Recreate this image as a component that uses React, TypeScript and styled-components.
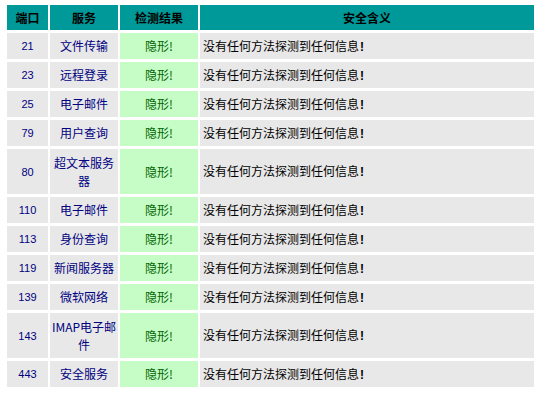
import React from 'react';
import styled, { createGlobalStyle } from 'styled-components';

type PortRow = {
  port: string;
  service: string;
  tall?: boolean;
};

const rows: PortRow[] = [
  { port: '21', service: '文件传输' },
  { port: '23', service: '远程登录' },
  { port: '25', service: '电子邮件' },
  { port: '79', service: '用户查询' },
  { port: '80', service: '超文本服务器', tall: true },
  { port: '110', service: '电子邮件' },
  { port: '113', service: '身份查询' },
  { port: '119', service: '新闻服务器' },
  { port: '139', service: '微软网络' },
  { port: '143', service: 'IMAP电子邮件', tall: true },
  { port: '443', service: '安全服务' },
];

const GlobalStyle = createGlobalStyle`
  html, body {
    margin: 0;
    padding: 0;
    background: #fff;
  }
  body {
    font-family: "Noto Sans CJK SC", "Liberation Sans", sans-serif;
    font-size: 12px;
  }
`;

const Page = styled.div`
  padding: 5px 0 0 7px;
`;

const Table = styled.div`
  display: grid;
  grid-template-columns: 41px 68px 78px 334px;
  column-gap: 2px;
  row-gap: 3px;
  width: 527px;
`;

const HeadCell = styled.div`
  box-sizing: border-box;
  height: 25px;
  display: flex;
  align-items: center;
  justify-content: center;
  background: #009999;
  color: #000;
  font-weight: bold;
  margin-bottom: 0px;
`;

const Cell = styled.div<{
  $tone?: 'gray' | 'green';
  $align?: 'left' | 'center';
  $color?: string;
  $tall?: boolean;
}>`
  box-sizing: border-box;
  height: ${(p) => (p.$tall ? 45 : 26)}px;
  display: flex;
  align-items: center;
  justify-content: ${(p) => (p.$align === 'left' ? 'flex-start' : 'center')};
  text-align: ${(p) => p.$align ?? 'center'};
  background: ${(p) => (p.$tone === 'green' ? '#c6fcc6' : '#e8e8e8')};
  color: ${(p) => p.$color ?? '#000'};
  line-height: 18px;
  padding: 0 1px;
  overflow: hidden;
`;

const Port = styled.span`
  font-family: "Liberation Sans", sans-serif;
  font-size: 11px;
`;

const Info = styled.span`
  padding-left: 2px;
`;

const Bang = styled.b`
  font-family: "Liberation Sans", sans-serif;
  font-weight: bold;
  margin-left: 1px;
`;

export default function App() {
  return (
    <Page>
      <GlobalStyle />
      <Table>
        <HeadCell>端口</HeadCell>
        <HeadCell>服务</HeadCell>
        <HeadCell>检测结果</HeadCell>
        <HeadCell>安全含义</HeadCell>
        {rows.map((r) => (
          <React.Fragment key={r.port}>
            <Cell $color="#000080" $tall={r.tall}>
              <Port>{r.port}</Port>
            </Cell>
            <Cell $color="#000080" $tall={r.tall}>
              {r.service}
            </Cell>
            <Cell $tone="green" $color="#006600" $tall={r.tall}>
              隐形!
            </Cell>
            <Cell $align="left" $tall={r.tall}>
              <Info>
                没有任何方法探测到任何信息<Bang>!</Bang>
              </Info>
            </Cell>
          </React.Fragment>
        ))}
      </Table>
    </Page>
  );
}
